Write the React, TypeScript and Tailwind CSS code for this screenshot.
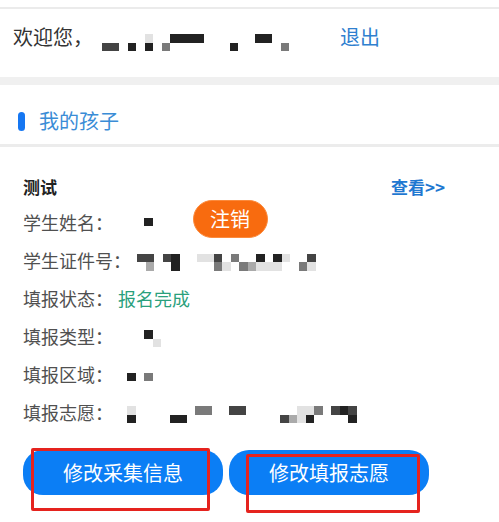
import React from 'react';

// mosaic shades used to stand in for the redacted text
const shade: Record<string, string> = {
  a: 'bg-[#222222]',
  b: 'bg-[#444444]',
  c: 'bg-[#7a7a7a]',
  d: 'bg-[#aaaaaa]',
  e: 'bg-[#e2e2e2]',
  '.': 'bg-transparent',
};

function Mosaic({ rows, className = '' }: { rows: string[]; className?: string }) {
  return (
    <div className={`flex flex-col ${className}`}>
      {rows.map((row, i) => (
        <div key={i} className="flex">
          {row.split('').map((ch, j) => (
            <span key={j} className={`block w-[8.5px] h-[8.5px] ${shade[ch]}`} />
          ))}
        </div>
      ))}
    </div>
  );
}

function InfoRow({ label, children }: { label: string; children?: React.ReactNode }) {
  return (
    <div className="flex items-center h-[38px]">
      <span className="text-[18px] leading-[24px] text-[#505050] whitespace-nowrap">{label}</span>
      {children}
    </div>
  );
}

export default function App() {
  return (
    <div
      className="relative w-full min-h-screen bg-white"
      style={{ fontFamily: '"Noto Sans CJK SC", "Noto Sans", sans-serif' }}
    >
      {/* Welcome bar */}
      <div className="mt-[7px] border-t-2 border-[#ebebeb]" />
      <div className="flex items-start h-[68px] pl-[13px] pt-[15px]">
        <span className="text-[20px] leading-[26px] text-[#333333]">欢迎您，</span>
        <Mosaic
          className="ml-[9px] mt-[10px]"
          rows={['.....e..aaaa......aa..', 'bb.a.a.c.......a.....c']}
        />
        <span className="ml-[51px] text-[20px] leading-[26px] text-[#2f80cf]">退出</span>
      </div>
      <div className="h-[8px] bg-[#f0f0f0]" />

      {/* Section title */}
      <div className="flex items-center h-[62px] pl-[18px] pt-[13px] border-b-[3px] border-[#ececec]">
        <span className="block w-[7px] h-[19px] rounded-full bg-[#1677f2]" />
        <span className="ml-[14px] text-[20px] leading-[24px] text-[#3a8cd6]">我的孩子</span>
      </div>

      {/* Child card */}
      <div className="px-[23px]">
        <div className="flex items-center justify-between h-[56px] pt-[24px] pr-[31px]">
          <span className="text-[17px] leading-[20px] font-bold text-[#222222]">测试</span>
          <span className="text-[17px] leading-[20px] font-bold text-[#1f78d1]">查看&gt;&gt;</span>
        </div>

        <InfoRow label="学生姓名：">
          <Mosaic className="ml-[31px]" rows={['a']} />
          <button className="ml-[40px] -mt-[6px] h-[38px] w-[75px] rounded-full bg-[#f86b0f] border border-[#fb8a3c] text-[20px] text-white">
            注销
          </button>
        </InfoRow>
        <InfoRow label="学生证件号：">
          <Mosaic
            className="ml-[6px] mt-[4px]"
            rows={['bb.ba..eeb.c..a.ae..b', '.d..a....ce.cdeee..ce']}
          />
        </InfoRow>
        <InfoRow label="填报状态：">
          <span className="ml-[5px] text-[18px] leading-[24px] text-[#2aa07c]">报名完成</span>
        </InfoRow>
        <InfoRow label="填报类型：">
          <Mosaic className="ml-[31px] mt-[5px]" rows={['a.', '.e']} />
        </InfoRow>
        <InfoRow label="填报区域：">
          <Mosaic className="ml-[14px] mt-[6px]" rows={['a.c']} />
        </InfoRow>
        <InfoRow label="填报志愿：">
          <Mosaic
            className="ml-[14px] mt-[5px]"
            rows={['e.......cc..bb......eec.bab.', 'a....aa...........bdea....a.']}
          />
        </InfoRow>

        <div className="flex gap-[6px] mt-[19px]">
          <button className="w-[200px] h-[45px] rounded-[20px] bg-[#0b7ef5] text-[20px] text-white">
            修改采集信息
          </button>
          <button className="w-[200px] h-[45px] rounded-[20px] bg-[#0b7ef5] text-[20px] text-white">
            修改填报志愿
          </button>
        </div>
      </div>

      {/* red annotation boxes drawn over the buttons */}
      <div className="absolute left-[31px] top-[441px] w-[179px] h-[63px] border-[3px] border-[#e5231e] rounded-[2px] pointer-events-none" />
      <div className="absolute left-[246px] top-[447px] w-[174px] h-[59px] border-[3px] border-[#e5231e] rounded-[2px] pointer-events-none" />
    </div>
  );
}
